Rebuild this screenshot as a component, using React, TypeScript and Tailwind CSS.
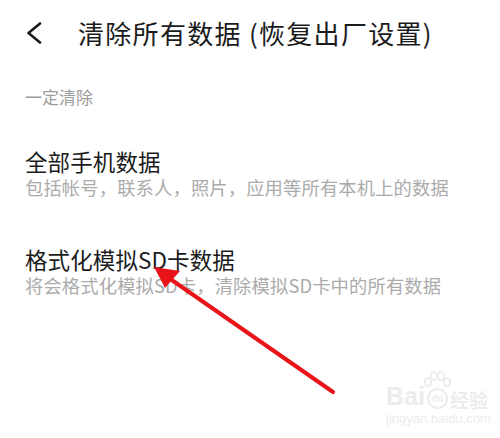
const font = { fontFamily: '"Noto Sans CJK SC", "Noto Sans", sans-serif' };

const items = [
  { title: "全部手机数据", desc: "包括帐号，联系人，照片，应用等所有本机上的数据" },
  { title: "格式化模拟SD卡数据", desc: "将会格式化模拟SD卡，清除模拟SD卡中的所有数据" },
];

export default function App() {
  return (
    <div
      className="relative w-[500px] h-[438px] overflow-hidden bg-white text-[#1b1b1b]"
      style={font}
    >
      {/* header */}
      <div className="flex items-center h-[66px] pl-[26px]">
        <svg width="16" height="22" viewBox="0 0 16 22" className="shrink-0">
          <polyline
            points="14,1.5 2.5,11 14,20.5"
            fill="none"
            stroke="#1b1b1b"
            strokeWidth="2.6"
            strokeLinecap="round"
            strokeLinejoin="round"
          />
        </svg>
        <h1 className="ml-[36px] text-[26px] leading-none tracking-[1.3px]">
          清除所有数据 (恢复出厂设置)
        </h1>
      </div>

      <div className="px-[25px]">
        <div className="mt-[22px] text-[17px] leading-none text-[#9d9d9d]">一定清除</div>

        <div className="mt-[43px] flex flex-col gap-[48px]">
          {items.map((it) => (
            <div key={it.title}>
              <div className="text-[22.5px] leading-[26px] tracking-[0.1px]">{it.title}</div>
              <div className="mt-[2px] text-[18.3px] leading-[22px] tracking-[0.15px] text-[#ababab]">{it.desc}</div>
            </div>
          ))}
        </div>
      </div>

      {/* red arrow annotation */}
      <svg className="absolute left-0 top-0" width="500" height="438" viewBox="0 0 500 438">
        <line x1="333" y1="392" x2="166" y2="276" stroke="#e8141a" strokeWidth="4" strokeLinecap="round" />
        <polygon points="154,267 180,271 165,288" fill="#e8141a" />
      </svg>

      {/* watermark */}
      <div className="absolute left-[386px] top-[384px] flex flex-col items-start text-[#ececec]">
        <div className="flex items-end gap-[2px] leading-none">
          <span className="text-[25px] font-bold" style={{ fontFamily: '"Liberation Sans", sans-serif' }}>Bai</span>
          <div className="relative">
            <svg className="absolute left-[-4px] top-[-17px]" width="28" height="18" viewBox="0 0 28 18">
              <g fill="none" stroke="#ececec" strokeWidth="2">
                <ellipse cx="5" cy="11" rx="3" ry="4" />
                <ellipse cx="11" cy="5" rx="3" ry="4" />
                <ellipse cx="18" cy="5" rx="3" ry="4" />
                <ellipse cx="24" cy="11" rx="3" ry="4" />
              </g>
            </svg>
            <span className="flex h-[21px] w-[21px] items-center justify-center rounded-full border-2 border-[#ececec] text-[9px] font-bold">du</span>
          </div>
          <span className="text-[19px] font-bold">经验</span>
        </div>
        <div className="mt-[3px] text-[13px] leading-none" style={{ fontFamily: '"Liberation Sans", sans-serif' }}>
          jingyan.baidu.com
        </div>
      </div>
    </div>
  );
}
